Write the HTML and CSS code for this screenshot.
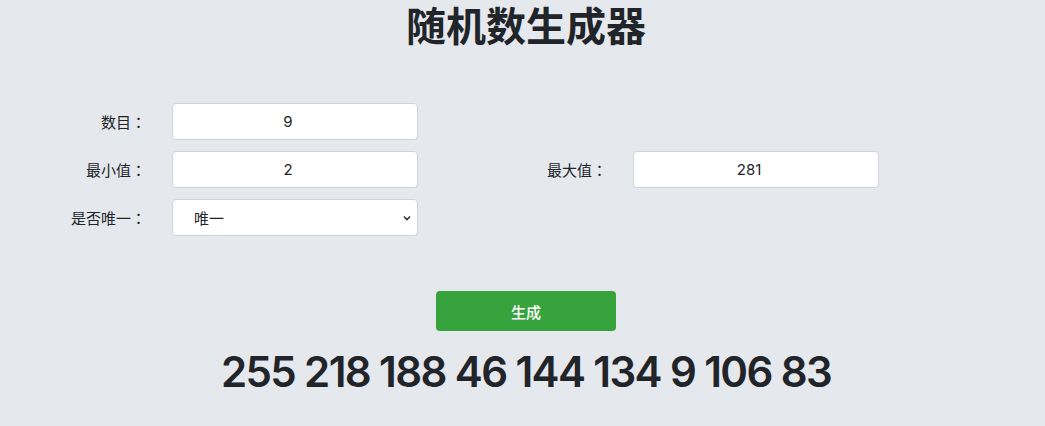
FILE: index.html
```html
<!DOCTYPE html>
<html lang="en">
<head>
    <meta charset="UTF-8">
    <meta name="viewport" content="width=device-width, initial-scale=1.0">
    <title>随机数生成器</title>
    <link rel="stylesheet" href="styles.css">
</head>
<body>

    <h1 class="title">随机数生成器</h1>

    <!-- Settings form -->
    <form class="settings">
        <label class="field-label" for="count">数目：</label>
        <input class="field" type="text" id="count" value="9">
        <span></span>
        <span></span>

        <label class="field-label" for="min">最小值：</label>
        <input class="field" type="text" id="min" value="2">
        <label class="field-label" for="max">最大值：</label>
        <input class="field" type="text" id="max" value="281">

        <label class="field-label" for="unique">是否唯一：</label>
        <select class="field select" id="unique">
            <option>唯一</option>
            <option>不唯一</option>
        </select>
    </form>

    <div class="actions">
        <button class="generate" type="button">生成</button>
    </div>

    <div class="result">255 218 188 46 144 134 9 106 83</div>

</body>
</html>
```

FILE: styles.css
```css
/* General */
body {
    margin: 0;
    padding: 0 0 0 7px;
    background: #e5e8ed;
    color: #212529;
    font-family: 'Inter', 'Noto Sans CJK SC', sans-serif;
}

.title {
    margin: 0;
    padding-top: 0;
    text-align: center;
    font-family: 'Noto Sans CJK SC', sans-serif;
    font-size: 40px;
    font-weight: 700;
    line-height: 48px;
}

/* Form grid */
.settings {
    display: grid;
    grid-template-columns: 139px 246px 163px 246px;
    column-gap: 26px;
    row-gap: 11px;
    margin-top: 55px;
}

.field-label {
    text-align: right;
    align-self: center;
    font-family: 'Noto Sans CJK TC', sans-serif;
    font-size: 15px;
}

.field {
    box-sizing: border-box;
    height: 37px;
    padding: 0 26px 0 12px;
    border: 1px solid #ced4da;
    border-radius: 4px;
    background: #fff;
    color: #212529;
    font-family: 'Inter', 'Noto Sans CJK SC', sans-serif;
    font-size: 15px;
    text-align: center;
}

.select {
    text-align: left;
    padding-left: 21px;
    font-family: 'Noto Sans CJK SC', sans-serif;
    font-size: 15px;
    appearance: none;
    background-image: url("data:image/svg+xml,%3Csvg xmlns='http://www.w3.org/2000/svg' width='8' height='6' viewBox='0 0 8 6'%3E%3Cpath d='M1 1.5 4 4.5 7 1.5' fill='none' stroke='%23333' stroke-width='1.6'/%3E%3C/svg%3E");
    background-repeat: no-repeat;
    background-position: right 6px center;
}

/* Button */
.actions {
    display: flex;
    justify-content: center;
    margin-top: 55px;
}

.generate {
    width: 180px;
    height: 40px;
    border: none;
    border-radius: 4px;
    background: #37a33c;
    color: #fff;
    font-family: 'Noto Sans CJK SC', sans-serif;
    font-size: 15px;
    font-weight: 500;
}

/* Output */
.result {
    margin-top: 12px;
    text-align: center;
    font-size: 42px;
    font-weight: 600;
    letter-spacing: -1.6px;
    line-height: 58px;
}
```
